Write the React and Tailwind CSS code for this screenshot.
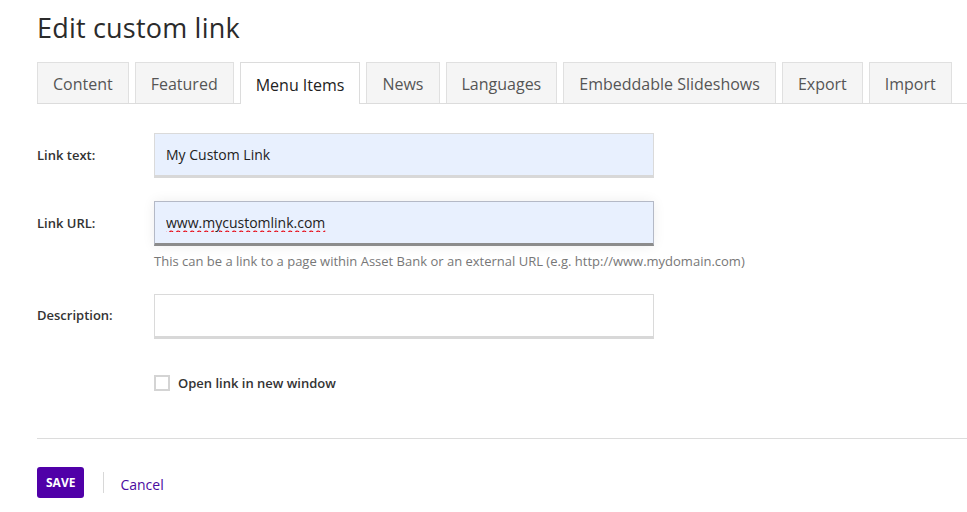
import React, { useState } from 'react';

const tabs = ['Content', 'Featured', 'Menu Items', 'News', 'Languages', 'Embeddable Slideshows', 'Export', 'Import'];

const App = () => {
    const [text, setText] = useState('My Custom Link');
    const [url, setUrl] = useState('www.mycustomlink.com');
    const [desc, setDesc] = useState('');
    const [newWindow, setNewWindow] = useState(false);

    return (
        <div className="min-h-screen bg-white text-[#333] font-['Open_Sans',sans-serif]">
            <div className="pl-[37px] pt-[11px]">
                {/* Title */}
                <h1 className="text-[27px] leading-[34px] text-[#2b2b2b] tracking-[0.2px]">Edit custom link</h1>

                {/* Tabs */}
                <div className="mt-[17px] flex items-end gap-[6px] border-b border-[#dcdcdc] h-[42px]">
                    {tabs.map((tab) => (
                        <div
                            key={tab}
                            className={
                                tab === 'Menu Items'
                                    ? 'shrink-0 whitespace-nowrap h-[42px] -mb-px px-[15px] pt-[2px] flex items-center bg-white border border-b-0 border-[#dcdcdc] text-[16px] text-[#222]'
                                    : 'shrink-0 whitespace-nowrap h-[41px] px-[15px] pt-[2px] flex items-center bg-[#f5f5f5] border border-b-0 border-[#e0e0e0] text-[16px] text-[#555]'
                            }
                        >
                            {tab}
                        </div>
                    ))}
                </div>

                {/* Form */}
                <div className="mt-[29px] flex flex-col">
                    <div className="flex items-center">
                        <label className="w-[117px] text-[13px] font-semibold text-[#333]">Link text:</label>
                        <input
                            value={text}
                            onChange={(e) => setText(e.target.value)}
                            className="w-[500px] h-[45px] px-[11px] bg-[#e8f0fe] border border-[#dadada] border-b-[3px] border-b-[#d8d8d8] text-[14px] text-[#222] outline-none"
                        />
                    </div>

                    <div className="mt-[23px] flex items-center">
                        <label className="w-[117px] text-[13px] font-semibold text-[#333]">Link URL:</label>
                        <input
                            value={url}
                            onChange={(e) => setUrl(e.target.value)}
                            className="w-[500px] h-[45px] px-[11px] bg-[#e8f0fe] border border-[#b4b9c6] border-b-[3px] border-b-[#8c8c8c] text-[14px] text-[#222] outline-none shadow-[0_0_12px_rgba(0,0,0,0.07)] underline decoration-wavy decoration-red-600 underline-offset-2"
                        />
                    </div>
                    <p className="ml-[117px] mt-[6px] text-[13px] text-[#777]">
                        This can be a link to a page within Asset Bank or an external URL (e.g. http://www.mydomain.com)
                    </p>

                    <div className="mt-[22px] flex items-center">
                        <label className="w-[117px] text-[13px] font-semibold text-[#333]">Description:</label>
                        <input
                            value={desc}
                            onChange={(e) => setDesc(e.target.value)}
                            className="w-[500px] h-[45px] px-[11px] bg-white border border-[#dadada] border-b-[3px] border-b-[#d8d8d8] text-[14px] text-[#222] outline-none"
                        />
                    </div>

                    <label className="ml-[117px] mt-[35px] flex items-center gap-[8px] cursor-pointer">
                        <span
                            onClick={() => setNewWindow(!newWindow)}
                            className="w-[16px] h-[16px] border-2 border-[#d4d4d4] bg-white"
                        />
                        <span className="text-[13px] font-semibold text-[#333]">Open link in new window</span>
                    </label>
                </div>

                {/* Footer */}
                <div className="mt-[45px] border-t border-[#dcdcdc]" />
                <div className="mt-[28px] flex items-center">
                    <button className="h-[31px] px-[9px] rounded-[3px] bg-[#5000a8] text-white text-[12px] font-bold">
                        SAVE
                    </button>
                    <div className="ml-[19px] w-px h-[21px] bg-[#d8d8d8]" />
                    <a href="#" className="ml-[16px] pt-[3px] text-[14px] text-[#4b0aa0]">Cancel</a>
                </div>
            </div>
        </div>
    );
};

export default App;
